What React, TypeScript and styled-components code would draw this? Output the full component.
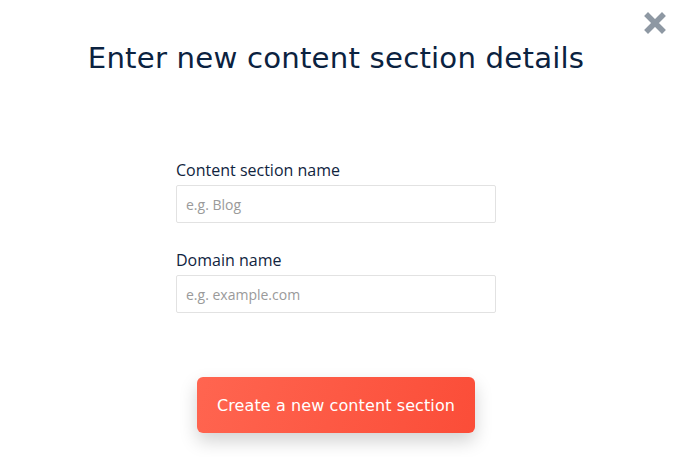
import React from "react";
import styled, { createGlobalStyle } from "styled-components";

const Global = createGlobalStyle`
  html, body { margin: 0; padding: 0; background: #ffffff; }
  * { box-sizing: border-box; }
`;

const Page = styled.div`
  position: relative;
  width: 672px;
  height: 457px;
  display: flex;
  flex-direction: column;
  align-items: center;
  font-family: "Open Sans", sans-serif;
`;

const CloseButton = styled.button`
  position: absolute;
  top: 11px;
  right: 5px;
  width: 24px;
  height: 24px;
  padding: 0;
  border: none;
  background: transparent;
  display: flex;
  align-items: center;
  justify-content: center;
`;

const Title = styled.h1`
  margin: 38px 0 0;
  font-family: "DejaVu Sans", sans-serif;
  font-weight: 400;
  font-size: 29.2px;
  line-height: 40px;
  letter-spacing: 0.2px;
  color: #0b2240;
`;

const Form = styled.div`
  margin-top: 81px;
  width: 320px;
  display: flex;
  flex-direction: column;
  gap: 26px;
`;

const Field = styled.div`
  display: flex;
  flex-direction: column;
  gap: 4px;
`;

const Label = styled.label`
  font-size: 16px;
  line-height: 22px;
  color: #10243e;
`;

const Input = styled.input`
  width: 320px;
  height: 38px;
  border: 1px solid #e2e2e2;
  border-radius: 2px;
  padding: 0 9px;
  font-family: "Open Sans", sans-serif;
  font-size: 14px;
  color: #333;
  outline: none;
  &::placeholder { color: #9a9a9a; }
`;

const Submit = styled.button`
  margin-top: 64px;
  width: 278px;
  height: 56px;
  border: none;
  border-radius: 6px;
  background: linear-gradient(110deg, #ff6550 0%, #fb4d38 100%);
  color: #ffffff;
  font-family: "DejaVu Sans", sans-serif;
  font-size: 16px;
  letter-spacing: 0.1px;
  box-shadow: 0 8px 18px rgba(0, 0, 0, 0.18);
`;

export default function App() {
  return (
    <>
      <Global />
      <Page>
        <CloseButton aria-label="Close">
          <svg width="22" height="22" viewBox="0 0 22 22">
            <path d="M4 4 L18 18 M18 4 L4 18" stroke="#8e98a3" strokeWidth="5.5" strokeLinecap="square" />
          </svg>
        </CloseButton>
        <Title>Enter new content section details</Title>
        <Form>
          <Field>
            <Label>Content section name</Label>
            <Input placeholder="e.g. Blog" />
          </Field>
          <Field>
            <Label>Domain name</Label>
            <Input placeholder="e.g. example.com" />
          </Field>
        </Form>
        <Submit>Create a new content section</Submit>
      </Page>
    </>
  );
}
